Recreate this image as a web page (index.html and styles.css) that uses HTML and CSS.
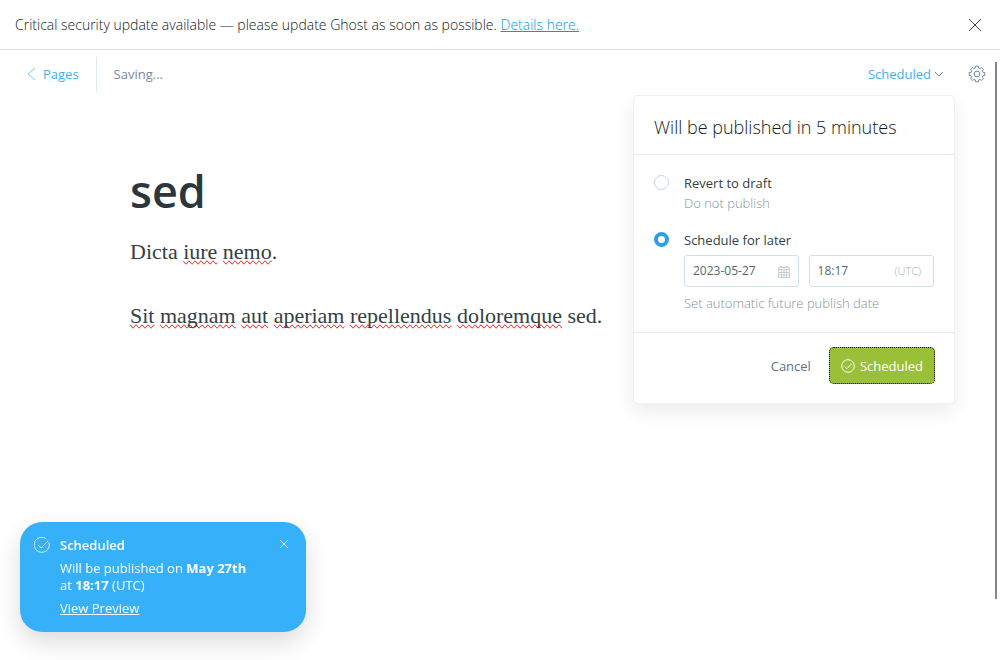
FILE: index.html
```html
<!DOCTYPE html>
<html lang="en">
<head>
<meta charset="utf-8">
<title>sed - Editor</title>
<link rel="stylesheet" href="styles.css">
</head>
<body>
<div class="alert" role="alert">
  <p class="alert-text">Critical security update available — please update Ghost as soon as possible. <a href="#details">Details here.</a></p>
  <button class="icon-button" type="button" aria-label="Close alert">
    <svg width="14" height="14" viewBox="0 0 14 14"><path d="M1 1l12 12M13 1L1 13"/></svg>
  </button>
</div>
<header class="toolbar">
  <a class="back" href="#pages"><svg width="9" height="14" viewBox="0 0 9 14"><path d="M8 1L1 7l7 6"/></svg>Pages</a>
  <span class="status">Saving...</span>
  <div class="publish">
    <button class="publish-trigger" type="button" aria-expanded="true">Scheduled<svg width="10" height="8" viewBox="0 0 10 8"><path d="M1 2l4 4 4-4"/></svg></button>
    <form class="popover">
      <h2 class="popover-title">Will be published in 5 minutes</h2>
      <div class="options">
        <div class="option">
          <input type="radio" name="state" id="draft">
          <div class="option-body">
            <label for="draft">Revert to draft</label>
            <p class="hint">Do not publish</p>
          </div>
        </div>
        <div class="option">
          <input type="radio" name="state" id="later" checked>
          <div class="option-body">
            <label for="later">Schedule for later</label>
            <div class="when">
              <div class="field field-date">
                <input type="text" value="2023-05-27" aria-label="Date">
                <svg width="12" height="13" viewBox="0 0 12 13"><path d="M.5 2.500h11v10H.5zM.5 4.500h11M.5 7.500h11M.5 10h11M3.500 4v8M6 4v8M8.500 4v8M2 1.500h2M8 1.500h2"/></svg>
              </div>
              <div class="field field-time">
                <input type="text" value="18:17" aria-label="Time">
                <small>(UTC)</small>
              </div>
            </div>
            <p class="hint">Set automatic future publish date</p>
          </div>
        </div>
      </div>
      <div class="popover-footer">
        <button class="cancel" type="button">Cancel</button>
        <button class="confirm" type="button"><svg width="14" height="14" viewBox="0 0 14 14"><circle cx="7" cy="7" r="6.300"/><path d="M3.500 7.300L6 9.700l4.700-5"/></svg>Scheduled</button>
      </div>
    </form>
  </div>
  <button class="icon-button settings" type="button" aria-label="Settings">
    <svg width="18" height="18" viewBox="0 0 18 18" stroke-linejoin="round"><circle cx="9" cy="9" r="2.900"/><path d="M7.400 3L7.500 1.200h3L10.600 3 12.100 3.600 13.500 2.400 15.600 4.500 14.400 5.900 15 7.400 16.800 7.500v3L15 10.600 14.400 12.100 15.600 13.500 13.500 15.600 12.100 14.400 10.600 15 10.500 16.800h-3L7.400 15 5.900 14.400 4.500 15.600 2.400 13.500 3.600 12.100 3 10.600 1.200 10.500v-3L3 7.400 3.600 5.900 2.400 4.500 4.500 2.400 5.900 3.600z"/></svg>
  </button>
</header>
<main class="editor">
  <h1>sed</h1>
  <p>Dicta <u>iure</u> <u>nemo</u>.</p>
  <p><u>Sit</u> <u>magnam</u> <u>aut</u> <u>aperiam</u> <u>repellendus</u> <u>doloremque</u> sed.</p>
</main>
<div class="scroll-thumb"></div>
<aside class="toast" role="status">
  <svg class="toast-icon" width="16" height="16" viewBox="0 0 16 16"><path d="M14.900 5.500A7.500 7.500 0 1 1 12.500 2M4.200 8l3 3 7-7.200"/></svg>
  <div class="toast-body">
    <strong class="toast-title">Scheduled</strong>
    <p>Will be published on <b>May 27th</b><br>at <b>18:17</b> (UTC)</p>
    <a href="#preview">View Preview</a>
  </div>
  <button class="icon-button" type="button" aria-label="Dismiss">
    <svg width="10" height="10" viewBox="0 0 10 10"><path d="M1 1l8 8M9 1L1 9"/></svg>
  </button>
</aside>
</body>
</html>
```
FILE: styles.css
```css
* { box-sizing: border-box; }
body {
  margin: 0;
  min-height: 100vh;
  background: #fff;
  color: #343f44;
  font: 13px/20px "Open Sans", "Noto Sans", sans-serif;
}
h1, h2, p { margin: 0; }
button, input { font: inherit; color: inherit; }
button { padding: 0; border: 0; background: none; cursor: pointer; }
svg { display: block; flex: none; fill: none; stroke: currentColor; stroke-width: 1; }

.alert {
  display: flex;
  align-items: center;
  justify-content: space-between;
  height: 50px;
  padding: 0 18px 0 15px;
  border-bottom: 1px solid #dcdee0;
  color: #14191c;
  font-size: 14px;
  font-weight: 300;
}
.alert-text { padding-top: 1px; }
.alert a { color: #0c97e6; }
.alert svg { opacity: .8; }

.toolbar {
  display: flex;
  align-items: center;
  height: 48px;
  padding: 0 14px 0 27px;
}
.back {
  display: flex;
  align-items: center;
  gap: 7px;
  height: 35px;
  padding-right: 17px;
  border-right: 1px solid #dbe9f3;
  color: #3eb0ef;
  text-decoration: none;
}
.back svg { opacity: .7; }
.status { padding-left: 17px; color: #7c8b9a; }
.publish { position: relative; margin-left: auto; }
.publish-trigger {
  display: flex;
  align-items: center;
  gap: 3px;
  color: #3eb0ef;
}
.publish-trigger svg { color: #6b8494; }
.settings { margin-left: 24px; color: #738a94; }

.popover {
  position: absolute;
  top: 31px;
  right: -11px;
  width: 322px;
  border: 1px solid #eef1f3;
  border-radius: 5px;
  background: #fff;
  box-shadow: 0 8px 20px rgba(0, 0, 0, .08);
}
.popover-title {
  padding: 20px 20px 16px;
  border-bottom: 1px solid #e3edf4;
  color: #14191c;
  font-size: 18px;
  font-weight: 300;
  line-height: 22px;
}
.options {
  display: grid;
  gap: 17px;
  padding: 18px 20px 19px;
}
.option { display: flex; gap: 15px; }
.option > input {
  appearance: none;
  flex: none;
  width: 15px;
  height: 15px;
  margin: 2px 0 0;
  border: 1px solid #bfd8e8;
  border-radius: 50%;
}
.option > input:checked { border: 4px solid #2f9fe0; }
.option-body { flex: 1; min-width: 0; }
.option-body label { display: block; }
.hint { color: #84949e; font-weight: 300; }
.when { display: flex; gap: 10px; padding: 5px 0 6px; }
.field {
  display: flex;
  align-items: center;
  height: 32px;
  padding: 0 8px;
  border: 1px solid #d0dfe8;
  border-radius: 3px;
  color: #54666d;
}
.field-date { flex: 14 1 0; min-width: 0; }
.field-time { flex: 15 1 0; min-width: 0; padding-right: 12px; }
.field input {
  flex: 1;
  width: 100%;
  min-width: 0;
  padding: 0;
  border: 0;
  outline: 0;
  background: none;
  font-size: 12px;
}
.field svg { color: #c6ced2; }
.field small { color: #a3b0b7; font-size: 11px; font-weight: 300; }
.popover-footer {
  display: flex;
  align-items: center;
  justify-content: flex-end;
  gap: 18px;
  padding: 14px 19px 19px;
  border-top: 1px solid #e3edf4;
}
.cancel { color: #607580; }
.confirm {
  display: flex;
  align-items: center;
  gap: 5px;
  height: 37px;
  padding: 0 12px;
  border-radius: 5px;
  outline: 1px dotted #000;
  outline-offset: -1px;
  background: #9abf38;
  color: #fff;
}

.editor {
  padding: 60px 130px;
  font: 22px/32px "Liberation Serif", serif;
}
.editor h1 {
  margin-bottom: 12px;
  color: #2b373c;
  font: 600 45px/66px "Open Sans", "Noto Sans", sans-serif;
}
.editor p + p { margin-top: 32px; }
.editor u {
  text-decoration: underline wavy #e02020 1px;
  text-decoration-line: spelling-error;
}

.scroll-thumb {
  position: fixed;
  top: 62px;
  right: 3px;
  bottom: 61px;
  width: 2px;
  background: #858585;
}

.toast {
  position: fixed;
  left: 20px;
  bottom: 28px;
  display: flex;
  align-items: flex-start;
  width: 286px;
  padding: 15px 17px 15px 14px;
  border-radius: 22px;
  background: #36b1f9;
  box-shadow: 0 10px 24px rgba(0, 0, 0, .14);
  color: #fff;
  line-height: 17px;
}
.toast svg { opacity: .8; }
.toast-body { flex: 1; padding-left: 10px; }
.toast-title { display: block; font-weight: 600; }
.toast-body p { padding: 6px 0; }
.toast a { color: #fff; }
.toast .icon-button { padding-top: 2px; }
```
